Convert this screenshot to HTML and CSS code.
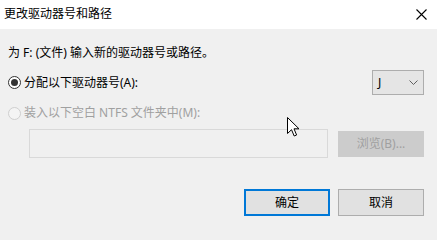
FILE: index.html
```html
<!DOCTYPE html>
<html lang="zh-CN">
<head>
<meta charset="utf-8">
<title>更改驱动器号和路径</title>
<link rel="stylesheet" href="styles.css">
</head>
<body>
<div class="window">
  <div class="titlebar">
    <span class="title">更改驱动器号和路径</span>
    <svg class="close" width="11" height="11" viewBox="0 0 11 11"><path d="M0.5 0.5 L10.5 10.5 M10.5 0.5 L0.5 10.5" stroke="#000" stroke-width="1.1" fill="none"/></svg>
  </div>
  <div class="content">
    <div class="intro">为 F: (文件) 输入新的驱动器号或路径。</div>
    <div class="row row-drive">
      <label class="option">
        <span class="radio checked"><span class="dot"></span></span>
        <span class="label">分配以下驱动器号(A):</span>
      </label>
      <div class="combo">
        <span class="combo-value">J</span>
        <svg class="chevron" width="9" height="5" viewBox="0 0 9 5"><path d="M0.5 0.5 L4.5 4.5 L8.5 0.5" stroke="#606060" stroke-width="1" fill="none"/></svg>
      </div>
    </div>
    <div class="row row-folder">
      <label class="option disabled">
        <span class="radio"></span>
        <span class="label">装入以下空白 NTFS 文件夹中(M):</span>
      </label>
    </div>
    <div class="row row-path">
      <div class="pathbox"></div>
      <button class="btn btn-disabled">浏览(B)...</button>
    </div>
    <div class="actions">
      <button class="btn btn-default">确定</button>
      <button class="btn">取消</button>
    </div>
  </div>
  <svg class="cursor" width="13" height="20" viewBox="0 0 13 20"><path d="M0.5 0.5 L0.5 16.5 L4.5 12.7 L7.2 19 L9.6 18 L7 11.8 L12 11.8 Z" fill="#fff" stroke="#000" stroke-width="1" stroke-linejoin="miter"/></svg>
</div>
</body>
</html>
```
FILE: styles.css
```css
html, body {
  margin: 0;
  padding: 0;
}
body {
  width: 437px;
  height: 233px;
  overflow: hidden;
  background: #f0f0f0;
  font-family: "Noto Sans", "Noto Sans CJK SC", sans-serif;
  font-size: 12px;
  color: #000;
}
.window {
  position: relative;
  width: 437px;
  height: 233px;
}
.titlebar {
  height: 29px;
  background: #fff;
  display: flex;
  align-items: center;
  justify-content: space-between;
  padding: 0 10px 0 4px;
  box-sizing: border-box;
}
.title {
  line-height: 16px;
  margin-top: -1px;
}
.close {
  display: block;
  margin-top: -1px;
}
.content {
  padding: 0 13px 0 8px;
}
.intro {
  margin-top: 16px;
  line-height: 16px;
}
.row {
  display: flex;
  align-items: center;
}
.row-drive {
  margin-top: 9px;
  height: 25px;
  justify-content: space-between;
}
.option {
  display: flex;
  align-items: center;
  line-height: 16px;
}
.radio {
  width: 13px;
  height: 13px;
  box-sizing: border-box;
  border: 1px solid #333;
  border-radius: 50%;
  background: #fff;
  display: flex;
  align-items: center;
  justify-content: center;
  margin-right: 3px;
}
.dot {
  width: 7px;
  height: 7px;
  border-radius: 50%;
  background: #333;
}
.disabled .radio {
  border-color: #cfcfcf;
  background: #f4f4f4;
}
.disabled .label {
  color: #a0a0a0;
}
.combo {
  width: 52px;
  height: 25px;
  box-sizing: border-box;
  border: 1px solid #adadad;
  background: #e5e5e5;
  display: flex;
  align-items: center;
  justify-content: space-between;
  padding: 0 5px 0 5px;
}
.combo-value {
  line-height: 16px;
}
.chevron {
  display: block;
}
.row-folder {
  margin-top: 10px;
  height: 16px;
}
.row-path {
  margin-top: 8px;
  height: 29px;
}
.pathbox {
  margin-left: 21px;
  width: 299px;
  height: 29px;
  box-sizing: border-box;
  border: 1px solid #d9d9d9;
  background: #f0f0f0;
}
.btn {
  width: 86px;
  height: 27px;
  box-sizing: border-box;
  border: 1px solid #adadad;
  background: #e1e1e1;
  font-family: inherit;
  font-size: 12px;
  color: #000;
  padding: 0;
  line-height: 16px;
}
.btn-disabled {
  margin-left: 10px;
  height: 26px;
  border-color: #cccccc;
  background: #cccccc;
  color: #a0a0a0;
}
.actions {
  margin-top: 31px;
  display: flex;
  justify-content: flex-end;
  gap: 8px;
}
.btn-default {
  border: 2px solid #0078d7;
}
.cursor {
  position: absolute;
  left: 287px;
  top: 117px;
}
```
